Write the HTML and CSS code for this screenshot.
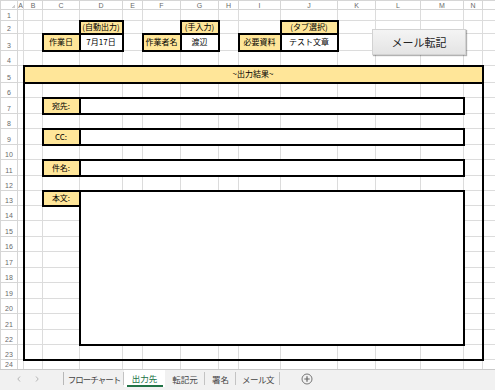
FILE: index.html
```html
<!DOCTYPE html>
<html lang="ja">
<head>
    <meta charset="UTF-8">
    <title>出力先</title>
    <link rel="stylesheet" href="styles.css">
</head>
<body>
    <div class="wrap">
        <table class="sheet">
            <colgroup>
                <col class="c-hd"><col class="c-a"><col class="c-b"><col class="c-c"><col class="c-d">
                <col class="c-e"><col class="c-f"><col class="c-g"><col class="c-h"><col class="c-i">
                <col class="c-j"><col class="c-k"><col class="c-l"><col class="c-m"><col class="c-n"><col class="c-x">
            </colgroup>
            <tr class="r-hd"><th class="corner"></th><th>A</th><th>B</th><th>C</th><th>D</th><th>E</th><th>F</th><th>G</th><th>H</th><th>I</th><th>J</th><th>K</th><th>L</th><th>M</th><th>N</th><th></th></tr>
            <tr class="r1"><th>1</th><td></td><td></td><td></td><td></td><td></td><td></td><td></td><td></td><td></td><td></td><td></td><td></td><td></td><td></td><td></td></tr>
            <tr class="r2"><th>2</th><td></td><td></td><td></td><td class="tag">(自動出力)</td><td></td><td></td><td class="tag">(手入力)</td><td></td><td></td><td class="tag">(タブ選択)</td><td></td><td></td><td></td><td></td><td></td></tr>
            <tr class="r3"><th>3</th><td></td><td></td><td class="lbl">作業日</td><td class="val">7月17日</td><td></td><td class="lbl">作業者名</td><td class="val">渡辺</td><td></td><td class="lbl">必要資料</td><td class="val">テスト文章</td><td></td><td></td><td></td><td></td><td></td></tr>
            <tr class="r4"><th>4</th><td></td><td></td><td></td><td></td><td></td><td></td><td></td><td></td><td></td><td></td><td></td><td></td><td></td><td></td><td></td></tr>
            <tr class="r5"><th>5</th><td></td><td colspan="13" class="band">~出力結果~</td><td></td></tr>
            <tr class="r15"><th>6</th><td></td><td class="bl"></td><td></td><td></td><td></td><td></td><td></td><td></td><td></td><td></td><td></td><td></td><td></td><td class="br"></td><td></td></tr>
            <tr class="r16"><th>7</th><td></td><td class="bl"></td><td class="lbl">宛先:</td><td colspan="10" class="field"></td><td class="br"></td><td></td></tr>
            <tr class="r15"><th>8</th><td></td><td class="bl"></td><td></td><td></td><td></td><td></td><td></td><td></td><td></td><td></td><td></td><td></td><td></td><td class="br"></td><td></td></tr>
            <tr class="r16"><th>9</th><td></td><td class="bl"></td><td class="lbl">CC:</td><td colspan="10" class="field"></td><td class="br"></td><td></td></tr>
            <tr class="r15"><th>10</th><td></td><td class="bl"></td><td></td><td></td><td></td><td></td><td></td><td></td><td></td><td></td><td></td><td></td><td></td><td class="br"></td><td></td></tr>
            <tr class="r16"><th>11</th><td></td><td class="bl"></td><td class="lbl">件名:</td><td colspan="10" class="field"></td><td class="br"></td><td></td></tr>
            <tr class="r15"><th>12</th><td></td><td class="bl"></td><td></td><td></td><td></td><td></td><td></td><td></td><td></td><td></td><td></td><td></td><td></td><td class="br"></td><td></td></tr>
            <tr class="r15"><th>13</th><td></td><td class="bl"></td><td class="lbl">本文:</td><td colspan="10" rowspan="10" class="field"></td><td class="br"></td><td></td></tr>
            <tr class="r15"><th>14</th><td></td><td class="bl"></td><td></td><td class="br"></td><td></td></tr>
            <tr class="r16"><th>15</th><td></td><td class="bl"></td><td></td><td class="br"></td><td></td></tr>
            <tr class="r15"><th>16</th><td></td><td class="bl"></td><td></td><td class="br"></td><td></td></tr>
            <tr class="r16"><th>17</th><td></td><td class="bl"></td><td></td><td class="br"></td><td></td></tr>
            <tr class="r15"><th>18</th><td></td><td class="bl"></td><td></td><td class="br"></td><td></td></tr>
            <tr class="r16"><th>19</th><td></td><td class="bl"></td><td></td><td class="br"></td><td></td></tr>
            <tr class="r15"><th>20</th><td></td><td class="bl"></td><td></td><td class="br"></td><td></td></tr>
            <tr class="r16"><th>21</th><td></td><td class="bl"></td><td></td><td class="br"></td><td></td></tr>
            <tr class="r15"><th>22</th><td></td><td class="bl"></td><td></td><td class="br"></td><td></td></tr>
            <tr class="r15"><th>23</th><td></td><td class="bl bb"></td><td class="bb"></td><td class="bb"></td><td class="bb"></td><td class="bb"></td><td class="bb"></td><td class="bb"></td><td class="bb"></td><td class="bb"></td><td class="bb"></td><td class="bb"></td><td class="bb"></td><td class="br bb"></td><td></td></tr>
            <tr class="r24"><th>24</th><td></td><td></td><td></td><td></td><td></td><td></td><td></td><td></td><td></td><td></td><td></td><td></td><td></td><td></td><td></td></tr>
        </table>

        <!-- shape floating over L2:M3 -->
        <div class="btn">メール転記</div>
    </div>

    <div class="tabs">
        <div class="nav">
            <svg width="4" height="6" viewBox="0 0 4 6"><path d="M3 0.5 L0.8 3 L3 5.5" fill="none" stroke="#b5b5b5" stroke-width="1"/></svg>
            <svg width="4" height="6" viewBox="0 0 4 6"><path d="M1 0.5 L3.2 3 L1 5.5" fill="none" stroke="#b5b5b5" stroke-width="1"/></svg>
        </div>
        <div class="tab t-flow">フローチャート</div>
        <div class="tab t-out active">出力先</div>
        <div class="tab t-src">転記元</div>
        <div class="tab t-sig">署名</div>
        <div class="tab t-mail">メール文</div>
        <div class="add">
            <svg width="12" height="12" viewBox="0 0 12 12">
                <circle cx="6" cy="6" r="5" fill="none" stroke="#777" stroke-width="1"/>
                <path d="M6 3.3 V8.7 M3.3 6 H8.7" stroke="#666" stroke-width="1.2"/>
            </svg>
        </div>
    </div>
</body>
</html>
```

FILE: styles.css
```css
* {
    margin: 0;
    padding: 0;
    box-sizing: border-box;
}

body {
    width: 495px;
    height: 390px;
    overflow: hidden;
    background: #fff;
    color: #000;
    font-family: "Noto Sans CJK JP", "Noto Sans", sans-serif;
}

.wrap {
    position: relative;
    height: 369px;
    overflow: hidden;
}

/* sheet grid */
.sheet {
    width: 495px;
    border-collapse: collapse;
    table-layout: fixed;
}

.c-hd { width: 17px; }
.c-a { width: 6px; }
.c-b { width: 19px; }
.c-c { width: 37px; }
.c-d { width: 43px; }
.c-e { width: 20px; }
.c-f { width: 38px; }
.c-g { width: 38px; }
.c-h { width: 20px; }
.c-i { width: 42px; }
.c-j { width: 57px; }
.c-k { width: 38px; }
.c-l { width: 45px; }
.c-m { width: 43px; }
.c-n { width: 19px; }
.c-x { width: 13px; }

.r-hd { height: 9px; }
.r1 { height: 11px; }
.r2 { height: 13px; }
.r3 { height: 17px; }
.r4 { height: 15px; }
.r5 { height: 17px; }
.r15 { height: 15px; }
.r16 { height: 16px; }
.r24 { height: 10px; }

td, th {
    padding: 0;
    border: 1px solid #dcdcdc;
    font-size: 8px;
    line-height: 1;
    font-weight: normal;
    text-align: center;
    white-space: nowrap;
    overflow: hidden;
}

th {
    font-family: "Liberation Sans", sans-serif;
    font-size: 7px;
    color: #6a6a6a;
    border-color: #d6d6d6;
}

tr > th:first-child {
    vertical-align: bottom;
    padding-bottom: 1px;
}

.r-hd th {
    vertical-align: middle;
}

.corner {
    background: linear-gradient(135deg, transparent 62%, #cfcfcf 62%) right 2px bottom 1px / 5px 5px no-repeat;
}

/* boxes */
.tag,
.lbl {
    background: #ffe699;
    border: 2px solid #000;
}

.val,
.field {
    background: #fff;
    border: 2px solid #000;
}

.band {
    background: #ffe699;
    border: 2px solid #000;
}

.bl { border-left: 2px solid #000; }
.br { border-right: 2px solid #000; }
.bb { border-bottom: 2px solid #000; }

/* floating button */
.btn {
    position: absolute;
    left: 372px;
    top: 29px;
    width: 94px;
    height: 26px;
    display: flex;
    justify-content: center;
    align-items: center;
    font-size: 11px;
    color: #222;
    background: linear-gradient(#f4f4f4, #e4e4e4);
    border: 1px solid #d2d2d2;
    box-shadow: 1px 1px 1px rgba(0, 0, 0, .3);
}

/* sheet tabs */
.tabs {
    height: 21px;
    display: flex;
    background: #f1f1f1;
    border-top: 1px solid #c9c9c9;
    font-size: 8.5px;
    color: #444;
}

.nav {
    width: 64px;
    height: 17px;
    display: flex;
    align-items: center;
    gap: 14px;
    padding-left: 17px;
    background: linear-gradient(#b8b8b8, #b8b8b8) right center / 1px 13px no-repeat;
}

.tab {
    height: 17px;
    display: flex;
    justify-content: center;
    align-items: center;
    background: linear-gradient(#c3c3c3, #c3c3c3) right center / 1px 13px no-repeat;
}

.t-flow { width: 60px; letter-spacing: -1px; }
.t-out { width: 41px; }
.t-src { width: 40px; }
.t-sig { width: 31px; }
.t-mail { width: 44px; letter-spacing: -0.5px; }

.tab.active {
    color: #217346;
    background: linear-gradient(#217346, #217346) center bottom / 36px 2px no-repeat, #fff;
    padding-bottom: 2px;
}

.add {
    height: 17px;
    display: flex;
    align-items: center;
    margin-left: 21px;
}
```
